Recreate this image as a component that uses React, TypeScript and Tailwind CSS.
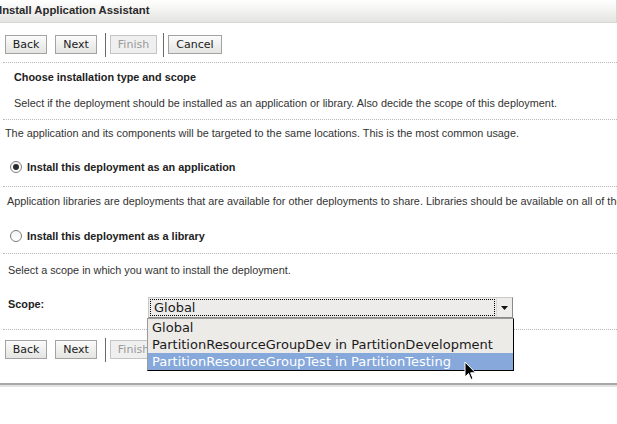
import React from "react";

const sans = { fontFamily: '"Liberation Sans", Arial, sans-serif' };
const deja = { fontFamily: '"DejaVu Sans", sans-serif' };

function Btn({ label, disabled, w }: { label: string; disabled?: boolean; w: string }) {
  return (
    <div
      style={deja}
      className={
        "h-[19px] flex items-center justify-center text-[11px] border " +
        w +
        (disabled
          ? " border-[#c4c4c4] bg-[#efefef] text-[#9a9a9a]"
          : " border-[#a3a3a3] bg-gradient-to-b from-[#fbfbfb] to-[#e4e4e2] text-[#1a1a1a]")
      }
    >
      {label}
    </div>
  );
}

function Sep() {
  return <div className="w-px h-[24px] bg-[#6a6a6a]" />;
}

function ButtonRow({ withCancel }: { withCancel?: boolean }) {
  return (
    <div className="flex items-center pl-[5px]">
      <Btn label="Back" w="w-[42px]" />
      <div className="w-[8px]" />
      <Btn label="Next" w="w-[42px]" />
      <div className="w-[8px]" />
      <Sep />
      <div className="w-[4px]" />
      <Btn label="Finish" disabled w="w-[47px]" />
      <div className="w-[6px]" />
      <Sep />
      <div className="w-[4px]" />
      {withCancel && <Btn label="Cancel" w="w-[54px]" />}
    </div>
  );
}

function Dotted() {
  return <div className="ml-[3px] h-0 border-t border-dotted border-[#b8b8b8]" />;
}

function Radio({ checked }: { checked?: boolean }) {
  return (
    <div className="w-[12px] h-[12px] rounded-full border border-[#7d7d7d] bg-gradient-to-b from-[#f4f4f4] to-white flex items-center justify-center">
      {checked && <div className="w-[6px] h-[6px] rounded-full bg-[#2b2b2b]" />}
    </div>
  );
}

export default function App() {
  return (
    <div style={sans} className="relative w-[617px] h-[424px] bg-white overflow-hidden text-[10.85px] leading-[14px] text-[#333]">
      {/* header */}
      <div className="h-[23px] border-b border-r border-[#d6d7d4] bg-gradient-to-b from-white to-[#e4e5e2] flex items-center">
        <span className="text-[11.3px] font-bold text-[#2a2a2a] -ml-[1px] -mt-[3px]">Install Application Assistant</span>
      </div>
      <div className="h-[39px] pt-[4px] flex items-center">
        <ButtonRow withCancel />
      </div>
      <Dotted />
      <div className="pt-[7px] pb-[9px] pl-[14px]">
        <div className="font-bold text-[#222]">Choose installation type and scope</div>
        <div className="mt-[12px]">
          Select if the deployment should be installed as an application or library. Also decide the scope of this deployment.
        </div>
      </div>
      <Dotted />
      <div className="pt-[6px] pb-[12px]">
        <div className="pl-[5px] whitespace-nowrap">
          The application and its components will be targeted to the same locations. This is the most common usage.
        </div>
        <div className="mt-[20px] pl-[10px] flex items-center gap-[5px] h-[14px]">
          <Radio checked />
          <span className="font-bold text-[#222]">Install this deployment as an application</span>
        </div>
      </div>
      <Dotted />
      <div className="pt-[7px] pb-[10px]">
        <div className="pl-[7px] whitespace-nowrap">
          Application libraries are deployments that are available for other deployments to share. Libraries should be available on all of the targets running their referencing applications.
        </div>
        <div className="mt-[21px] pl-[10px] flex items-center gap-[5px] h-[14px]">
          <Radio />
          <span className="font-bold text-[#222]">Install this deployment as a library</span>
        </div>
      </div>
      <Dotted />
      <div className="pt-[9px] pb-[12px]">
        <div className="pl-[8px]">Select a scope in which you want to install the deployment.</div>
        <div className="mt-[20px] flex h-[20px]">
          <div className="w-[148px] pl-[8px] font-bold text-[#222]">Scope:</div>
          <div className="w-[365px] h-[21px] border border-t-[#c8c8c8] border-l-[#c8c8c8] border-r-[#8a8a8a] border-b-[#8a8a8a] bg-[#edeceb] flex">
            <div className="flex-1 m-px border border-dotted border-black flex items-center pl-[3px]">
              <span style={deja} className="text-[13px] leading-[16px] text-[#1a1a1a]">Global</span>
            </div>
            <div className="w-[16px] flex items-center justify-center border-l border-[#d8d8d8]">
              <svg width="7" height="4" viewBox="0 0 7 4">
                <path d="M0 0 H7 L3.5 4 Z" fill="#111" />
              </svg>
            </div>
          </div>
        </div>
      </div>
      <Dotted />
      <div className="h-[39px] flex items-center">
        <ButtonRow />
      </div>
      <div className="mt-[14px] h-[2px] bg-[#a8a8a8]" />
      <div className="h-[2px] bg-[#e2e2e2]" />

      {/* dropdown popup */}
      <div
        style={deja}
        className="absolute left-[147px] top-[318px] w-[367px] border border-l-[#9a9a9a] border-t-[#9a9a9a] border-r-black border-b-black bg-[#edebe8] text-[13px] leading-[17px] text-[#1a1a1a]"
      >
        <div className="pl-[4px] h-[17px]">Global</div>
        <div className="pl-[4px] h-[17px]">PartitionResourceGroupDev in PartitionDevelopment</div>
        <div className="pl-[4px] h-[17px] bg-[#86a8da] text-white">PartitionResourceGroupTest in PartitionTesting</div>
      </div>

      {/* cursor */}
      <svg className="absolute left-[464px] top-[361px]" width="13" height="21" viewBox="0 0 13 21">
        <path d="M1 1 L1 16 L4.5 12.5 L7 18.5 L9 17.6 L6.6 11.8 L11.5 11.8 Z" fill="#000" stroke="#fff" strokeWidth="1" strokeLinejoin="round" />
      </svg>
    </div>
  );
}
